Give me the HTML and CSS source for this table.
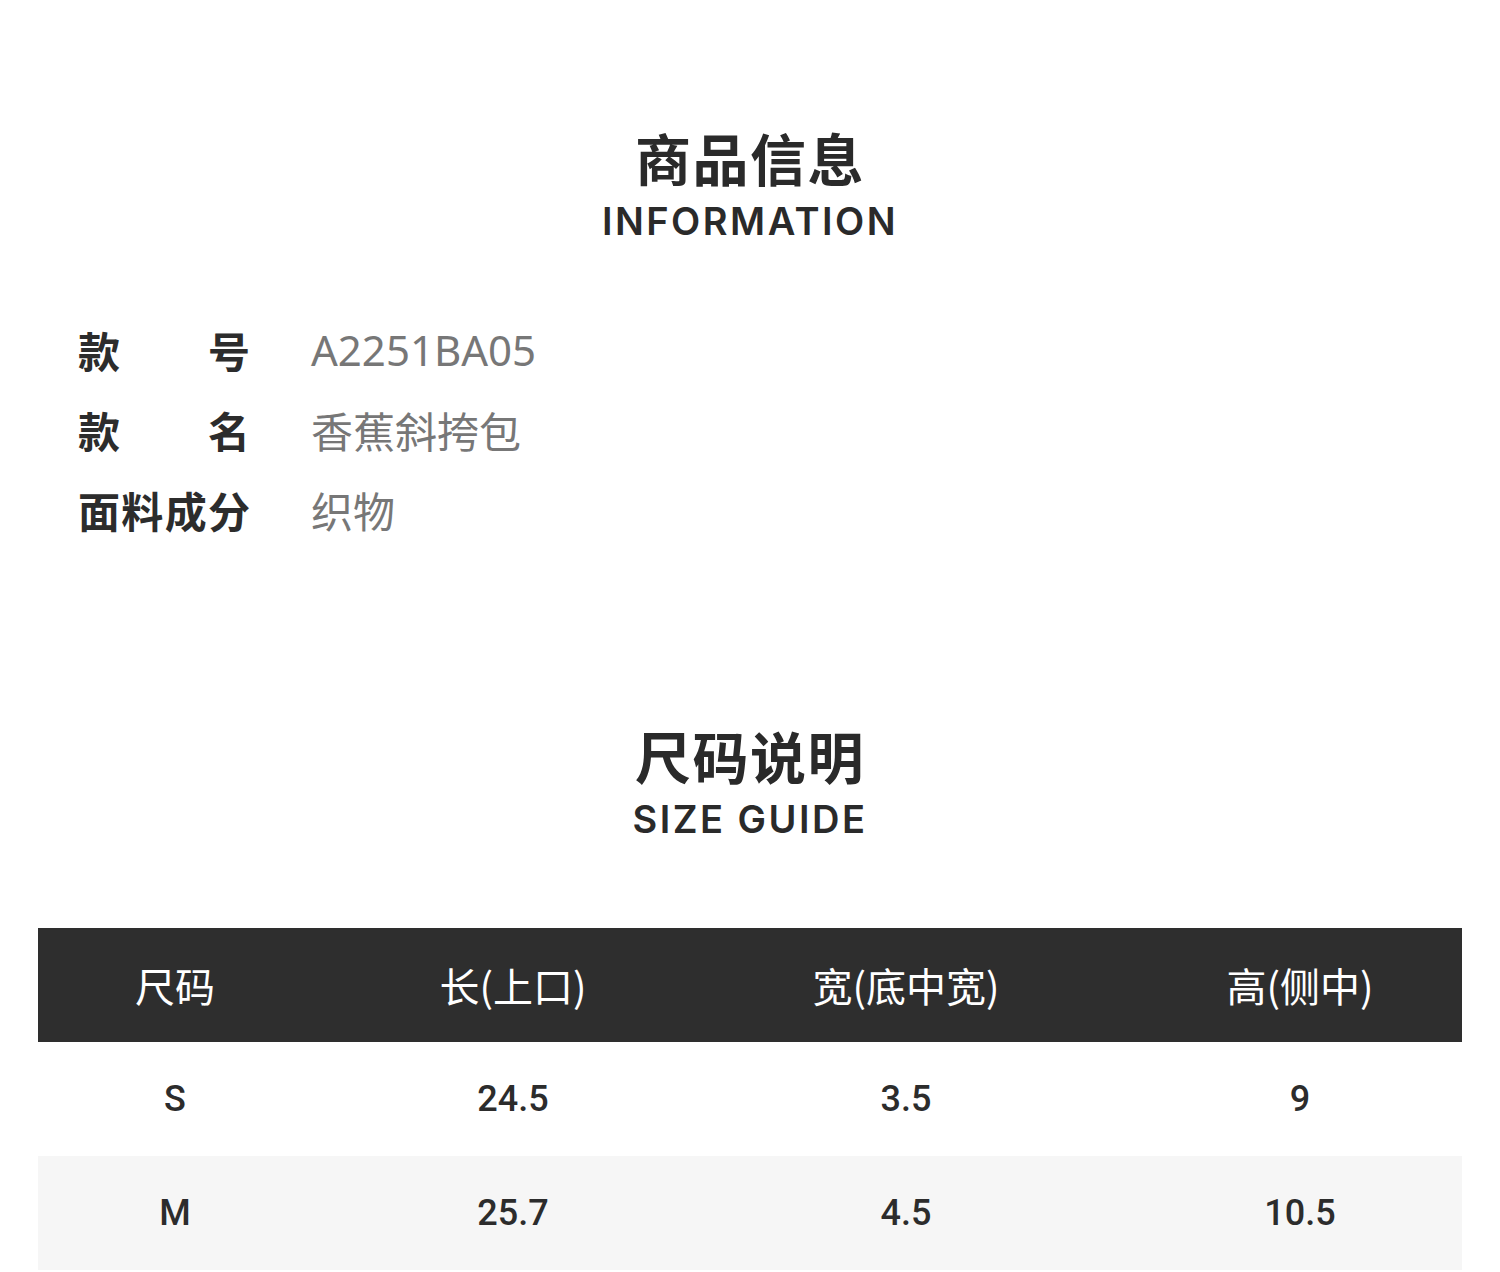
FILE: index.html
```html
<!DOCTYPE html>
<html lang="zh-CN">
<head>
<meta charset="utf-8">
<title>商品信息</title>
<link rel="stylesheet" href="styles.css">
</head>
<body>
<section class="sec sec-info">
  <div class="head">
    <h2 class="title">商品信息</h2>
    <div class="sub">INFORMATION</div>
  </div>
  <div class="info">
    <div class="row"><span class="lbl">款号</span><span class="val val-latin">A2251BA05</span></div>
    <div class="row"><span class="lbl">款名</span><span class="val">香蕉斜挎包</span></div>
    <div class="row"><span class="lbl">面料成分</span><span class="val">织物</span></div>
  </div>
</section>
<section class="sec sec-size">
  <div class="head">
    <h2 class="title">尺码说明</h2>
    <div class="sub">SIZE GUIDE</div>
  </div>
  <div class="table">
    <div class="tr th">
      <div class="c c1">尺码</div><div class="c c2">长(上口)</div><div class="c c3">宽(底中宽)</div><div class="c c4">高(侧中)</div>
    </div>
    <div class="tr td">
      <div class="c c1">S</div><div class="c c2">24.5</div><div class="c c3">3.5</div><div class="c c4">9</div>
    </div>
    <div class="tr td alt">
      <div class="c c1">M</div><div class="c c2">25.7</div><div class="c c3">4.5</div><div class="c c4">10.5</div>
    </div>
  </div>
</section>
</body>
</html>
```
FILE: styles.css
```css
* { box-sizing: border-box; }
html, body { margin: 0; padding: 0; background: #fff; }
body {
  width: 1500px;
  font-family: "Noto Sans CJK SC", "Noto Sans", sans-serif;
  color: #2c2c2c;
}
.head { text-align: center; }
.title {
  margin: 0;
  font-size: 56px;
  line-height: 64px;
  font-weight: 700;
  color: #2a2a2a;
  letter-spacing: 1.5px;
}
.sub {
  margin-top: 10px;
  font-family: "Inter", "Lato", sans-serif;
  font-size: 38px;
  line-height: 44px;
  font-weight: 600;
  letter-spacing: 2.5px;
  color: #2a2a2a;
}
.sec-info { padding-top: 125px; }
.info { margin-top: 67px; padding-left: 78px; }
.row { display: flex; align-items: center; height: 80px; }
.lbl {
  width: 172px;
  font-size: 42px;
  font-weight: 700;
  color: #2c2c2c;
  text-align: justify;
  text-align-last: justify;
  line-height: 1;
}
.val {
  margin-left: 61px;
  font-size: 42px;
  color: #777;
  line-height: 1;
}
.val-latin { font-family: "Noto Sans", "Noto Sans CJK SC", sans-serif; font-size: 42px; }
.sec-size { padding-top: 173px; }
.table { margin: 87px 38px 0; width: 1424px; }
.tr { display: flex; align-items: center; }
.th { height: 114px; background: #2e2e2e; color: #fff; font-size: 40px; }
.td { height: 114px; font-family: "Roboto", sans-serif; font-weight: 500; font-size: 36px; color: #2c2c2c; }
.alt { background: #f6f6f6; }
.c { text-align: center; }
.c1 { width: 274px; }
.c2 { width: 402px; }
.c3 { width: 384px; }
.c4 { width: 364px; padding-left: 40px; }
```
